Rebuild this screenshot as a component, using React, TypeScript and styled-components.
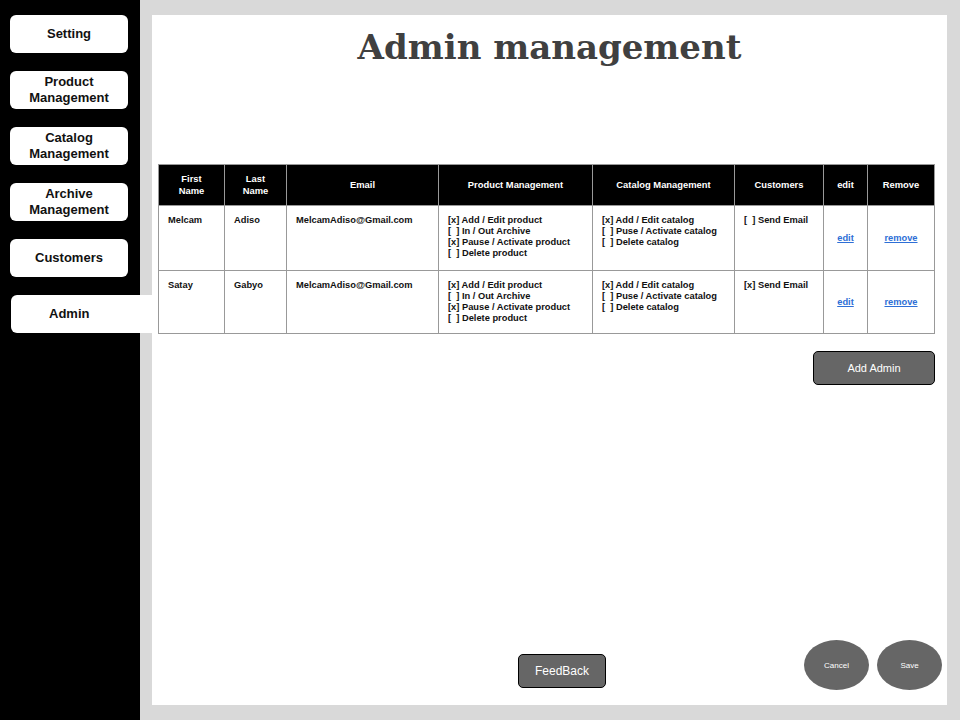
import styled, { createGlobalStyle } from "styled-components";

type Admin = {
    first: string;
    last: string;
    email: string;
    product: string[];
    catalog: string[];
    customers: string[];
};

const GlobalStyle = createGlobalStyle`
    body {
        margin: 0;
        background: #d9d9d9;
        font-family: "Liberation Sans", Arial, sans-serif;
    }
`;

const Page = styled.div`
    display: flex;
    width: 960px;
    height: 720px;
    overflow: hidden;
`;

const Sidebar = styled.nav`
    width: 140px;
    flex-shrink: 0;
    background: #000;
    padding: 15px 0 0 10px;
    box-sizing: border-box;
    display: flex;
    flex-direction: column;
    gap: 18px;
`;

const NavButton = styled.div<{ $active?: boolean }>`
    width: ${p => (p.$active ? "141px" : "118px")};
    margin-left: ${p => (p.$active ? "1px" : "0")};
    height: 38px;
    background: #fff;
    border-radius: ${p => (p.$active ? "6px 0 0 6px" : "6px")};
    display: flex;
    align-items: center;
    justify-content: ${p => (p.$active ? "flex-start" : "center")};
    padding-left: ${p => (p.$active ? "38px" : "0")};
    box-sizing: border-box;
    text-align: center;
    font-weight: 700;
    font-size: 13px;
    line-height: 16px;
    color: #111;
    flex-shrink: 0;
`;

const Main = styled.main`
    flex: 1;
    padding: 15px 14px 15px 12px;
    box-sizing: border-box;
`;

const Panel = styled.section`
    height: 100%;
    background: #fff;
    display: flex;
    flex-direction: column;
    padding: 0 12px 0 6px;
    box-sizing: border-box;
`;

const Title = styled.h1`
    margin: 10px 0 0 0;
    text-align: center;
    font-family: "DejaVu Serif", "Liberation Serif", serif;
    font-weight: 700;
    font-size: 34px;
    line-height: 44px;
    color: #404040;
    padding-left: 6px;
`;

const Table = styled.table`
    margin-top: 95px;
    width: 776px;
    border-collapse: collapse;
    table-layout: fixed;
    font-size: 9.3px;
    font-weight: 700;
    color: #111;
`;

const Th = styled.th`
    background: #000;
    color: #fff;
    height: 40px;
    font-size: 9.4px;
    font-weight: 700;
    line-height: 12px;
    text-align: center;
    border: 1px solid #999;
    padding: 0 4px;
`;

const Td = styled.td<{ $center?: boolean }>`
    border: 1px solid #999;
    vertical-align: ${p => (p.$center ? "middle" : "top")};
    text-align: ${p => (p.$center ? "center" : "left")};
    padding: ${p => (p.$center ? "0" : "9px 8px 0 9px")};
    line-height: 11px;
`;

const Line = styled.div`
    white-space: pre;
`;

const LinkText = styled.a`
    color: #2e6fd6;
    text-decoration: underline;
    font-size: 9.3px;
    font-weight: 700;
    cursor: pointer;
`;

const Actions = styled.div`
    display: flex;
    justify-content: flex-end;
    margin-top: 17px;
`;

const DarkButton = styled.button<{ $w: number; $size: number }>`
    width: ${p => p.$w}px;
    height: 34px;
    background: #666;
    color: #fff;
    border: 1px solid #000;
    border-radius: 5px;
    font-family: "Liberation Sans", Arial, sans-serif;
    font-size: ${p => p.$size}px;
    padding: 0;
`;

const Footer = styled.div`
    margin-top: auto;
    display: flex;
    align-items: flex-end;
`;

const FeedBackWrap = styled.div`
    margin-left: 360px;
    margin-bottom: 17px;
`;

const RoundGroup = styled.div`
    margin-left: auto;
    margin-right: -7px;
    margin-bottom: 15px;
    display: flex;
    gap: 8px;
`;

const RoundButton = styled.button`
    width: 65px;
    height: 50px;
    border-radius: 50%;
    background: #666;
    color: #fff;
    border: none;
    font-family: "Liberation Sans", Arial, sans-serif;
    font-size: 8px;
    padding: 0;
`;

const navItems = ["Setting", "Product\nManagement", "Catalog\nManagement", "Archive\nManagement", "Customers"];

const admins: Admin[] = [
    {
        first: "Melcam",
        last: "Adiso",
        email: "MelcamAdiso@Gmail.com",
        product: ["[x] Add / Edit product", "[  ] In / Out Archive", "[x] Pause / Activate product", "[  ] Delete product"],
        catalog: ["[x] Add / Edit catalog", "[  ] Puse / Activate catalog", "[  ] Delete catalog"],
        customers: ["[  ] Send Email"],
    },
    {
        first: "Satay",
        last: "Gabyo",
        email: "MelcamAdiso@Gmail.com",
        product: ["[x] Add / Edit product", "[  ] In / Out Archive", "[x] Pause / Activate product", "[  ] Delete product"],
        catalog: ["[x] Add / Edit catalog", "[  ] Puse / Activate catalog", "[  ] Delete catalog"],
        customers: ["[x] Send Email"],
    },
];

const columns = [
    { label: "First\nName", width: 66 },
    { label: "Last\nName", width: 62 },
    { label: "Email", width: 152 },
    { label: "Product Management", width: 154 },
    { label: "Catalog Management", width: 142 },
    { label: "Customers", width: 89 },
    { label: "edit", width: 44 },
    { label: "Remove", width: 67 },
];

function App() {
    return (
        <Page>
            <GlobalStyle />
            <Sidebar>
                {navItems.map(item => (
                    <NavButton key={item}>
                        <Line>{item}</Line>
                    </NavButton>
                ))}
                <NavButton $active>Admin</NavButton>
            </Sidebar>
            <Main>
                <Panel>
                    <Title>Admin management</Title>
                    <Table>
                        <colgroup>
                            {columns.map(c => (
                                <col key={c.label} style={{ width: c.width }} />
                            ))}
                        </colgroup>
                        <thead>
                            <tr>
                                {columns.map(c => (
                                    <Th key={c.label}>
                                        <Line>{c.label}</Line>
                                    </Th>
                                ))}
                            </tr>
                        </thead>
                        <tbody>
                            {admins.map((a, i) => (
                                <tr key={a.first} style={{ height: i === 0 ? 65 : 63 }}>
                                    <Td>{a.first}</Td>
                                    <Td>{a.last}</Td>
                                    <Td>{a.email}</Td>
                                    <Td>
                                        {a.product.map(p => (
                                            <Line key={p}>{p}</Line>
                                        ))}
                                    </Td>
                                    <Td>
                                        {a.catalog.map(c => (
                                            <Line key={c}>{c}</Line>
                                        ))}
                                    </Td>
                                    <Td>
                                        {a.customers.map(c => (
                                            <Line key={c}>{c}</Line>
                                        ))}
                                    </Td>
                                    <Td $center>
                                        <LinkText>edit</LinkText>
                                    </Td>
                                    <Td $center>
                                        <LinkText>remove</LinkText>
                                    </Td>
                                </tr>
                            ))}
                        </tbody>
                    </Table>
                    <Actions>
                        <DarkButton $w={122} $size={11}>Add Admin</DarkButton>
                    </Actions>
                    <Footer>
                        <FeedBackWrap>
                            <DarkButton $w={88} $size={12}>FeedBack</DarkButton>
                        </FeedBackWrap>
                        <RoundGroup>
                            <RoundButton>Cancel</RoundButton>
                            <RoundButton>Save</RoundButton>
                        </RoundGroup>
                    </Footer>
                </Panel>
            </Main>
        </Page>
    );
}

export default App;
